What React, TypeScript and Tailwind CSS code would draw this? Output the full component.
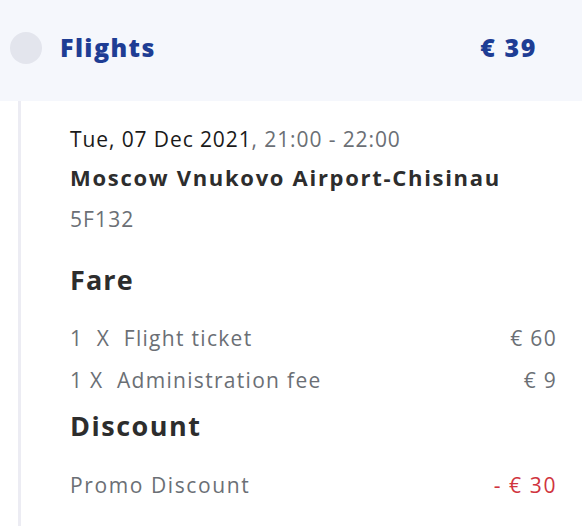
export default function App() {
  return (
    <div className="w-[582px] h-[526px] overflow-hidden bg-white" style={{ fontFamily: '"Open Sans", "Noto Sans", sans-serif' }}>
      {/* header */}
      <div className="h-[101px] bg-[#f5f7fc] flex items-center pl-[10px] pr-[45px] pb-[6px]">
        <div className="w-[32px] h-[32px] rounded-full bg-[#e3e5ed]" />
        <div className="ml-[18px] text-[25px] font-extrabold tracking-[1.4px] text-[#1e3d94]">Flights</div>
        <div className="ml-auto text-[25px] font-extrabold tracking-[1.6px] text-[#1e3d94]">€ 39</div>
      </div>

      <div className="flex">
        <div className="ml-[18px] w-[3px] h-[425px] bg-[#ececf3]" />
        <div className="flex-1 pl-[49px] pr-[25px] pt-[22px]">
          <div className="text-[21px] leading-[32px] tracking-[0.9px] text-[#1a1a1a]">
            Tue, 07 Dec 2021<span className="text-[#6b6f75]">, 21:00 - 22:00</span>
          </div>
          <div className="mt-[6px] text-[22px] leading-[32px] font-bold tracking-[1.7px] text-[#2d2d2d]">Moscow Vnukovo Airport-Chisinau</div>
          <div className="mt-[10px] text-[21px] leading-[32px] tracking-[1.1px] text-[#6b6f75]">5F132</div>

          <div className="mt-[27px] text-[27px] leading-[36px] font-bold tracking-[1.1px] text-[#2d2d2d]">Fare</div>
          <div className="mt-[24px] flex justify-between text-[21px] leading-[32px] tracking-[1.3px] text-[#6b6f75]">
            <span>1&nbsp; X&nbsp; Flight ticket</span>
            <span>€ 60</span>
          </div>
          <div className="mt-[10px] flex justify-between text-[21px] leading-[32px] tracking-[1.3px] text-[#6b6f75]">
            <span>1 X&nbsp; Administration fee</span>
            <span>€ 9</span>
          </div>
          <div className="mt-[12px] text-[27px] leading-[36px] font-bold tracking-[1.5px] text-[#2d2d2d]">Discount</div>
          <div className="mt-[25px] flex justify-between text-[21px] leading-[32px] tracking-[1.6px] text-[#6b6f75]">
            <span>Promo Discount</span>
            <span className="text-[#d0343e]">- € 30</span>
          </div>
        </div>
      </div>
    </div>
  );
}
